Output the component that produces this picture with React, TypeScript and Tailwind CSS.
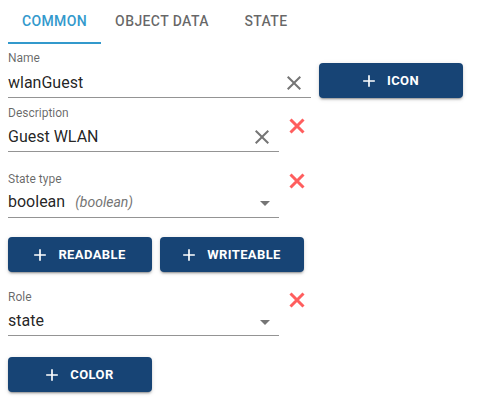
import React from 'react';

const CLEAR_PATH = 'M19 6.41L17.59 5 12 10.59 6.41 5 5 6.41 10.59 12 5 17.59 6.41 19 12 13.41 17.59 19 19 17.59 13.41 12z';

function ClearIcon() {
    return (
        <svg viewBox="0 0 24 24" className="h-6 w-6 fill-[#757575]">
            <path d={CLEAR_PATH} />
        </svg>
    );
}

function RedX({ className = '' }: { className?: string }) {
    return (
        <svg viewBox="0 0 16 16" className={`h-4 w-4 ${className}`}>
            <path d="M1.5 1.5L14.5 14.5M14.5 1.5L1.5 14.5" stroke="#ff5e5e" strokeWidth="3" />
        </svg>
    );
}

function DropArrow() {
    return (
        <svg viewBox="0 0 24 24" className="h-6 w-6 fill-[#757575]">
            <path d="M7 10l5 5 5-5z" />
        </svg>
    );
}

function PlusButton({ label, className = '' }: { label: string; className?: string }) {
    return (
        <button
            className={`flex h-[35px] w-[144px] items-center justify-center rounded-[4px] bg-[#174475] text-[13px] font-bold uppercase tracking-[0.03em] text-white shadow-[0_3px_1px_-2px_rgba(0,0,0,0.2),0_2px_2px_0_rgba(0,0,0,0.14),0_1px_5px_0_rgba(0,0,0,0.12)] ${className}`}
        >
            <svg viewBox="0 0 24 24" className="-ml-1 mr-2 h-5 w-5 fill-white">
                <path d="M19 13h-6v6h-2v-6H5v-2h6V5h2v6h6v2z" />
            </svg>
            {label}
        </button>
    );
}

export default function App() {
    const tabs = [
        { name: 'COMMON', w: 'w-[93px]', active: true },
        { name: 'OBJECT DATA', w: 'w-[122px]', active: false },
        { name: 'STATE', w: 'w-[86px]', active: false },
    ];

    return (
        <div className="h-[403px] w-[483px] bg-white pl-2 font-['Roboto','Liberation_Sans',sans-serif] text-[rgba(0,0,0,0.87)]">
            {/* Tabs */}
            <div className="flex h-[44px]">
                {tabs.map((t) => (
                    <div
                        key={t.name}
                        className={`flex ${t.w} items-center justify-center border-b-2 pt-[1px] text-[14px] font-medium tracking-[0.02857em] ${
                            t.active ? 'border-[#3399cc] text-[#3399cc]' : 'border-transparent text-[rgba(0,0,0,0.6)]'
                        }`}
                    >
                        {t.name}
                    </div>
                ))}
            </div>

            {/* Name */}
            <div className="mt-[6px] flex items-start">
                <div className="w-[303px]">
                    <div className="h-[16px] text-[12px] leading-[16px] text-[rgba(0,0,0,0.6)]">Name</div>
                    <div className="flex h-[32px] items-center border-b border-[#949494] pt-[2px]">
                        <span className="flex-1 text-[16px]">wlanGuest</span>
                        <span className="mr-[5px]">
                            <ClearIcon />
                        </span>
                    </div>
                </div>
                <PlusButton label="Icon" className="ml-2 mt-[13px]" />
            </div>

            {/* Description */}
            <div className="mt-[7px] flex items-start">
                <div className="w-[271px]">
                    <div className="h-[16px] text-[12px] leading-[16px] text-[rgba(0,0,0,0.6)]">Description</div>
                    <div className="flex h-[31px] items-center border-b border-[#949494] pt-[2px]">
                        <span className="flex-1 text-[16px]">Guest WLAN</span>
                        <span className="mr-[5px]">
                            <ClearIcon />
                        </span>
                    </div>
                </div>
                <RedX className="ml-[10px] mt-[13px]" />
            </div>

            {/* State type */}
            <div className="mt-[19px] flex items-start">
                <div className="w-[271px]">
                    <div className="h-[16px] text-[12px] leading-[16px] text-[rgba(0,0,0,0.6)]">State type</div>
                    <div className="flex h-[31px] items-center border-b border-[#949494]">
                        <span className="text-[16px]">boolean</span>
                        <span className="ml-[10px] flex-1 text-[14px] italic text-[#757575]">(boolean)</span>
                        <span className="mr-[2px] mt-[2px]">
                            <DropArrow />
                        </span>
                    </div>
                </div>
                <RedX className="ml-[10px] mt-[2px]" />
            </div>

            {/* Readable / Writeable */}
            <div className="mt-[19px] flex gap-2">
                <PlusButton label="Readable" />
                <PlusButton label="Writeable" />
            </div>

            {/* Role */}
            <div className="mt-[17px] flex items-start">
                <div className="w-[271px]">
                    <div className="h-[16px] text-[12px] leading-[16px] text-[rgba(0,0,0,0.6)]">Role</div>
                    <div className="flex h-[31px] items-center border-b border-[#949494] pt-[1px]">
                        <span className="flex-1 text-[16px]">state</span>
                        <span className="mr-[2px] mt-[2px]">
                            <DropArrow />
                        </span>
                    </div>
                </div>
                <RedX className="ml-[10px] mt-[3px]" />
            </div>

            {/* Color */}
            <div className="mt-[21px]">
                <PlusButton label="Color" />
            </div>
        </div>
    );
}
